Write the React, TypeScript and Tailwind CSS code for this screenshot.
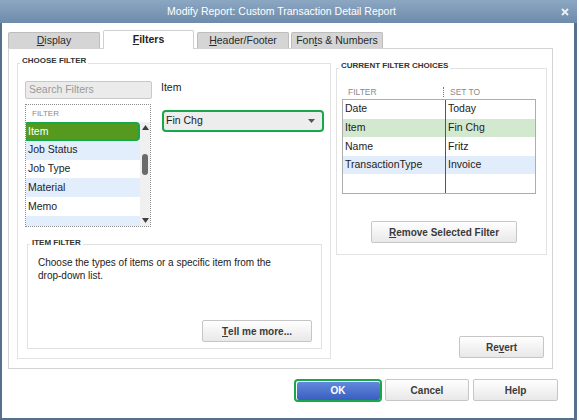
import React from 'react';

const SMALL = "font-['Liberation_Sans',Arial,sans-serif]";

const Button = ({ className = '', children }: { className?: string; children: React.ReactNode }) => (
  <div
    className={`flex items-center justify-center rounded-[2px] border border-[#c6c6c6] bg-linear-to-b from-white to-[#e8e8e8] font-bold text-[#3a3a3a] ${className}`}
  >
    {children}
  </div>
);

const Legend = ({ top, children }: { top: string; children: React.ReactNode }) => (
  <span className={`absolute left-[2px] ${top} bg-white px-[2px] text-[8px] font-bold leading-[12px] text-[#333]`}>
    {children}
  </span>
);

const filterRows = [
  { label: 'Item', bg: '', selected: true },
  { label: 'Job Status', bg: 'bg-[#e3eefc]', selected: false },
  { label: 'Job Type', bg: 'bg-white', selected: false },
  { label: 'Material', bg: 'bg-[#e3eefc]', selected: false },
  { label: 'Memo', bg: 'bg-white', selected: false },
  { label: '', bg: 'bg-[#e3eefc]', selected: false },
];

const choices = [
  { filter: 'Date', value: 'Today', bg: 'bg-white' },
  { filter: 'Item', value: 'Fin Chg', bg: 'bg-[#d3e9cf]' },
  { filter: 'Name', value: 'Fritz', bg: 'bg-white' },
  { filter: 'TransactionType', value: 'Invoice', bg: 'bg-[#e2edfb]' },
  { filter: '', value: '', bg: 'bg-white' },
];

const tabs = [
  { key: 'D', rest: 'isplay', pre: '', w: 'w-[92px]', ml: 'ml-0' },
  { key: 'F', rest: 'ilters', pre: '', w: 'w-[91px]', ml: 'ml-[3px]', active: true },
  { key: 'H', rest: 'eader/Footer', pre: '', w: 'w-[92px]', ml: 'ml-[3px]' },
  { key: 't', rest: 's & Numbers', pre: 'Fon', w: 'w-[92px]', ml: 'ml-[2px]' },
];

const App: React.FC = () => {
  return (
    <div className={`w-[579px] h-[420px] bg-white ${SMALL} text-[10px] text-[#1c1c1c]`}>
      <div className="w-[577px] h-[420px] flex flex-col bg-[#56718e] pl-[2px] pr-[3px] pb-[2px]">
        {/* Title bar */}
        <div className="relative h-[23px] shrink-0 -ml-[2px] -mr-[3px] flex items-center justify-center pr-[14px] bg-linear-to-b from-[#8ca7c2] to-[#6d8bab] text-white text-[10.5px]">
          Modify Report: Custom Transaction Detail Report
          <svg className="absolute right-[8px] top-[8px]" width="8" height="8" viewBox="0 0 8 8">
            <path d="M1 1 L7 7 M7 1 L1 7" stroke="#e9eef4" strokeWidth="2" />
          </svg>
        </div>

        {/* Client area */}
        <div className="flex-1 bg-white pl-[6px] pt-[7px] flex flex-col">
          {/* Tabs */}
          <div className="flex items-end h-[18px]">
            {tabs.map((t) => (
              <div
                key={t.rest}
                className={`${t.w} ${t.ml} flex items-center justify-center rounded-t-[2px] border border-b-0 text-[10.5px] ${
                  t.active
                    ? 'h-[19px] -mb-[1px] relative z-10 bg-white border-[#cfcfcf] font-bold text-[#222]'
                    : 'h-[16px] bg-[#d5d5d5] border-[#bdbdbd] text-[#2a2a2a]'
                }`}
              >
                {t.pre}
                <span className="underline">{t.key}</span>
                {t.rest}
              </div>
            ))}
          </div>

          {/* Panel */}
          <div className="w-[545px] h-[321px] border border-[#d3d3d3] flex">
            {/* Choose filter */}
            <div className="relative ml-[8px] mt-[14px] w-[314px] h-[296px] border border-[#e2e2e2] flex flex-col">
              <Legend top="top-[-9px]">CHOOSE FILTER</Legend>
              <div className="flex">
                <div className="ml-[7px] mt-[17px] w-[127px]">
                  <div className="h-[18px] rounded-[2px] border border-[#c8c8c8] bg-[#ebebeb] pl-[3px] flex items-center text-[10.5px] text-[#9a9a9a]">
                    Search Filters
                  </div>
                  {/* Filter list */}
                  <div className="mt-[5px] w-[126px] h-[123px] border border-dotted border-[#8c8c8c] flex flex-col">
                    <div className="h-[17px] shrink-0 pl-[6px] flex items-center text-[8px] text-[#8a8a8a]">FILTER</div>
                    <div className="flex flex-1 min-h-0">
                      <div className="flex-1 overflow-hidden text-[10.5px]">
                        {filterRows.map((r, i) =>
                          r.selected ? (
                            <div
                              key={i}
                              className="h-[19px] -ml-[2px] rounded-[4px] border-2 border-[#18a84c] bg-[#559a1f] pl-[2px] flex items-center text-white"
                            >
                              {r.label}
                            </div>
                          ) : (
                            <div key={i} className={`h-[18.7px] ${r.bg} pl-[2px] flex items-center`}>
                              {r.label}
                            </div>
                          )
                        )}
                      </div>
                      <div className="w-[10px] bg-[#f0f0f0] flex flex-col items-center">
                        <div className="h-[11px] flex items-center">
                          <svg width="7" height="5" viewBox="0 0 7 5">
                            <path d="M3.5 0 L7 5 L0 5 Z" fill="#404040" />
                          </svg>
                        </div>
                        <div className="mt-[21px] w-[6.5px] h-[21px] rounded-full bg-[#6b6b6b]" />
                        <div className="mt-auto h-[11px] flex items-center">
                          <svg width="7" height="5" viewBox="0 0 7 5">
                            <path d="M0 0 L7 0 L3.5 5 Z" fill="#404040" />
                          </svg>
                        </div>
                      </div>
                    </div>
                  </div>
                </div>

                <div className="ml-[9px] pt-[16px] text-[10.5px]">
                  <div className="h-[14px] leading-[14px]">Item</div>
                  <div className="mt-[16px] ml-[1px] w-[162px] h-[22px] rounded-[4px] border-2 border-[#18a84c] bg-[#ededed] flex items-center pl-[2px] pr-[7px]">
                    <span className="flex-1">Fin Chg</span>
                    <svg width="7" height="4" viewBox="0 0 7 4">
                      <path d="M0 0 L7 0 L3.5 4 Z" fill="#555" />
                    </svg>
                  </div>
                </div>
              </div>

              {/* Item filter */}
              <div className="relative ml-[9px] mt-[17px] w-[295px] h-[105px] border border-[#e2e2e2] flex flex-col">
                <Legend top="top-[-8px]">ITEM FILTER</Legend>
                <p className="pl-[10px] pt-[12px] leading-[12.5px] text-[#222]">
                  Choose the types of items or a specific item from the
                  <br />
                  drop-down list.
                </p>
                <Button className="mt-auto self-end mr-[9px] mb-[6px] w-[110px] h-[22px]">
                  <span className="underline">T</span>ell me more...
                </Button>
              </div>
            </div>

            {/* Right column */}
            <div className="ml-[5px] w-[211px] flex flex-col">
              <div className="relative mt-[19px] h-[187px] border border-[#e2e2e2] flex flex-col">
                <Legend top="top-[-9px]">CURRENT FILTER CHOICES</Legend>
                <div className="mt-[16px] ml-[5px] h-[14px] flex items-center text-[8.5px] text-[#8a8a8a]">
                  <span className="pl-[6px] w-[101px]">FILTER</span>
                  <span className="h-[10px] border-l border-dotted border-[#777]" />
                  <span className="pl-[6px]">SET TO</span>
                </div>
                <div className="ml-[5px] w-[194px] h-[95px] border border-[#adadad] flex flex-col text-[10.5px]">
                  {choices.map((c, i) => (
                    <div key={i} className={`h-[18.6px] flex ${c.bg}`}>
                      <div className="w-[102px] pl-[2px] flex items-center">{c.filter}</div>
                      <div className="border-l border-[#555] pl-[2px] flex items-center">{c.value}</div>
                    </div>
                  ))}
                </div>
                <Button className="mt-[27px] ml-[34px] w-[146px] h-[22px]">
                  <span className="underline">R</span>emove Selected Filter
                </Button>
              </div>
              <Button className="mt-[81px] ml-auto mr-[3px] w-[85px] h-[22px]">
                Re<span className="underline">v</span>ert
              </Button>
            </div>
          </div>

          {/* Bottom buttons */}
          <div className="mt-[10px] ml-[286px] flex items-start">
            <div className="w-[88px] h-[23px] rounded-[4px] border-2 border-[#18a84c] p-[0.5px]">
              <div className="h-full rounded-[2px] bg-linear-to-b from-[#6289dc] to-[#3a5ec0] flex items-center justify-center font-bold text-white">
                OK
              </div>
            </div>
            <Button className="ml-[3px] w-[84px] h-[22px]">Cancel</Button>
            <Button className="ml-[4px] w-[85px] h-[22px]">Help</Button>
          </div>
        </div>
      </div>
    </div>
  );
};

export default App;
